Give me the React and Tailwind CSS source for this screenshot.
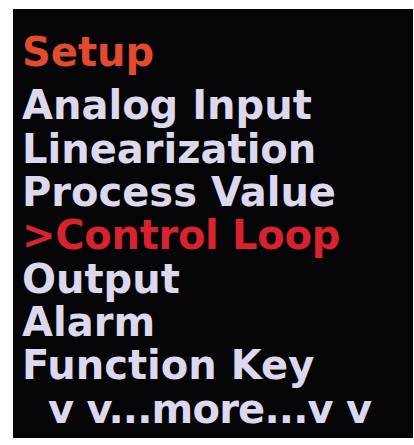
export default function App() {
  const items = [
    { t: "Analog Input", c: "text-[#dcd9ee]" },
    { t: "Linearization", c: "text-[#dcd9ee]" },
    { t: "Process Value", c: "text-[#dcd9ee]" },
    { t: ">Control Loop", c: "text-[#d8222e] tracking-[-0.3px]" },
    { t: "Output", c: "text-[#dcd9ee]" },
    { t: "Alarm", c: "text-[#dcd9ee]" },
    { t: "Function Key", c: "text-[#dcd9ee]" },
  ];
  return (
    <div className="w-[414px] h-[445px] bg-white pt-[9px] pl-[13px]">
      <div
        className="w-[400px] h-[429px] bg-[#050507] pt-[21.5px] pl-[9px] text-[40px] leading-[43.3px] font-bold whitespace-pre"
        style={{ fontFamily: '"DejaVu Sans", Verdana, sans-serif' }}
      >
        <div className="text-[#e44a2c] mb-[10.7px]">Setup</div>
        {items.map((it) => (
          <div key={it.t} className={it.c}>
            {it.t}
          </div>
        ))}
        <div className="text-[#dcd9ee] pl-[26px] tracking-[-0.8px]">v v...more...v v</div>
      </div>
    </div>
  );
}
